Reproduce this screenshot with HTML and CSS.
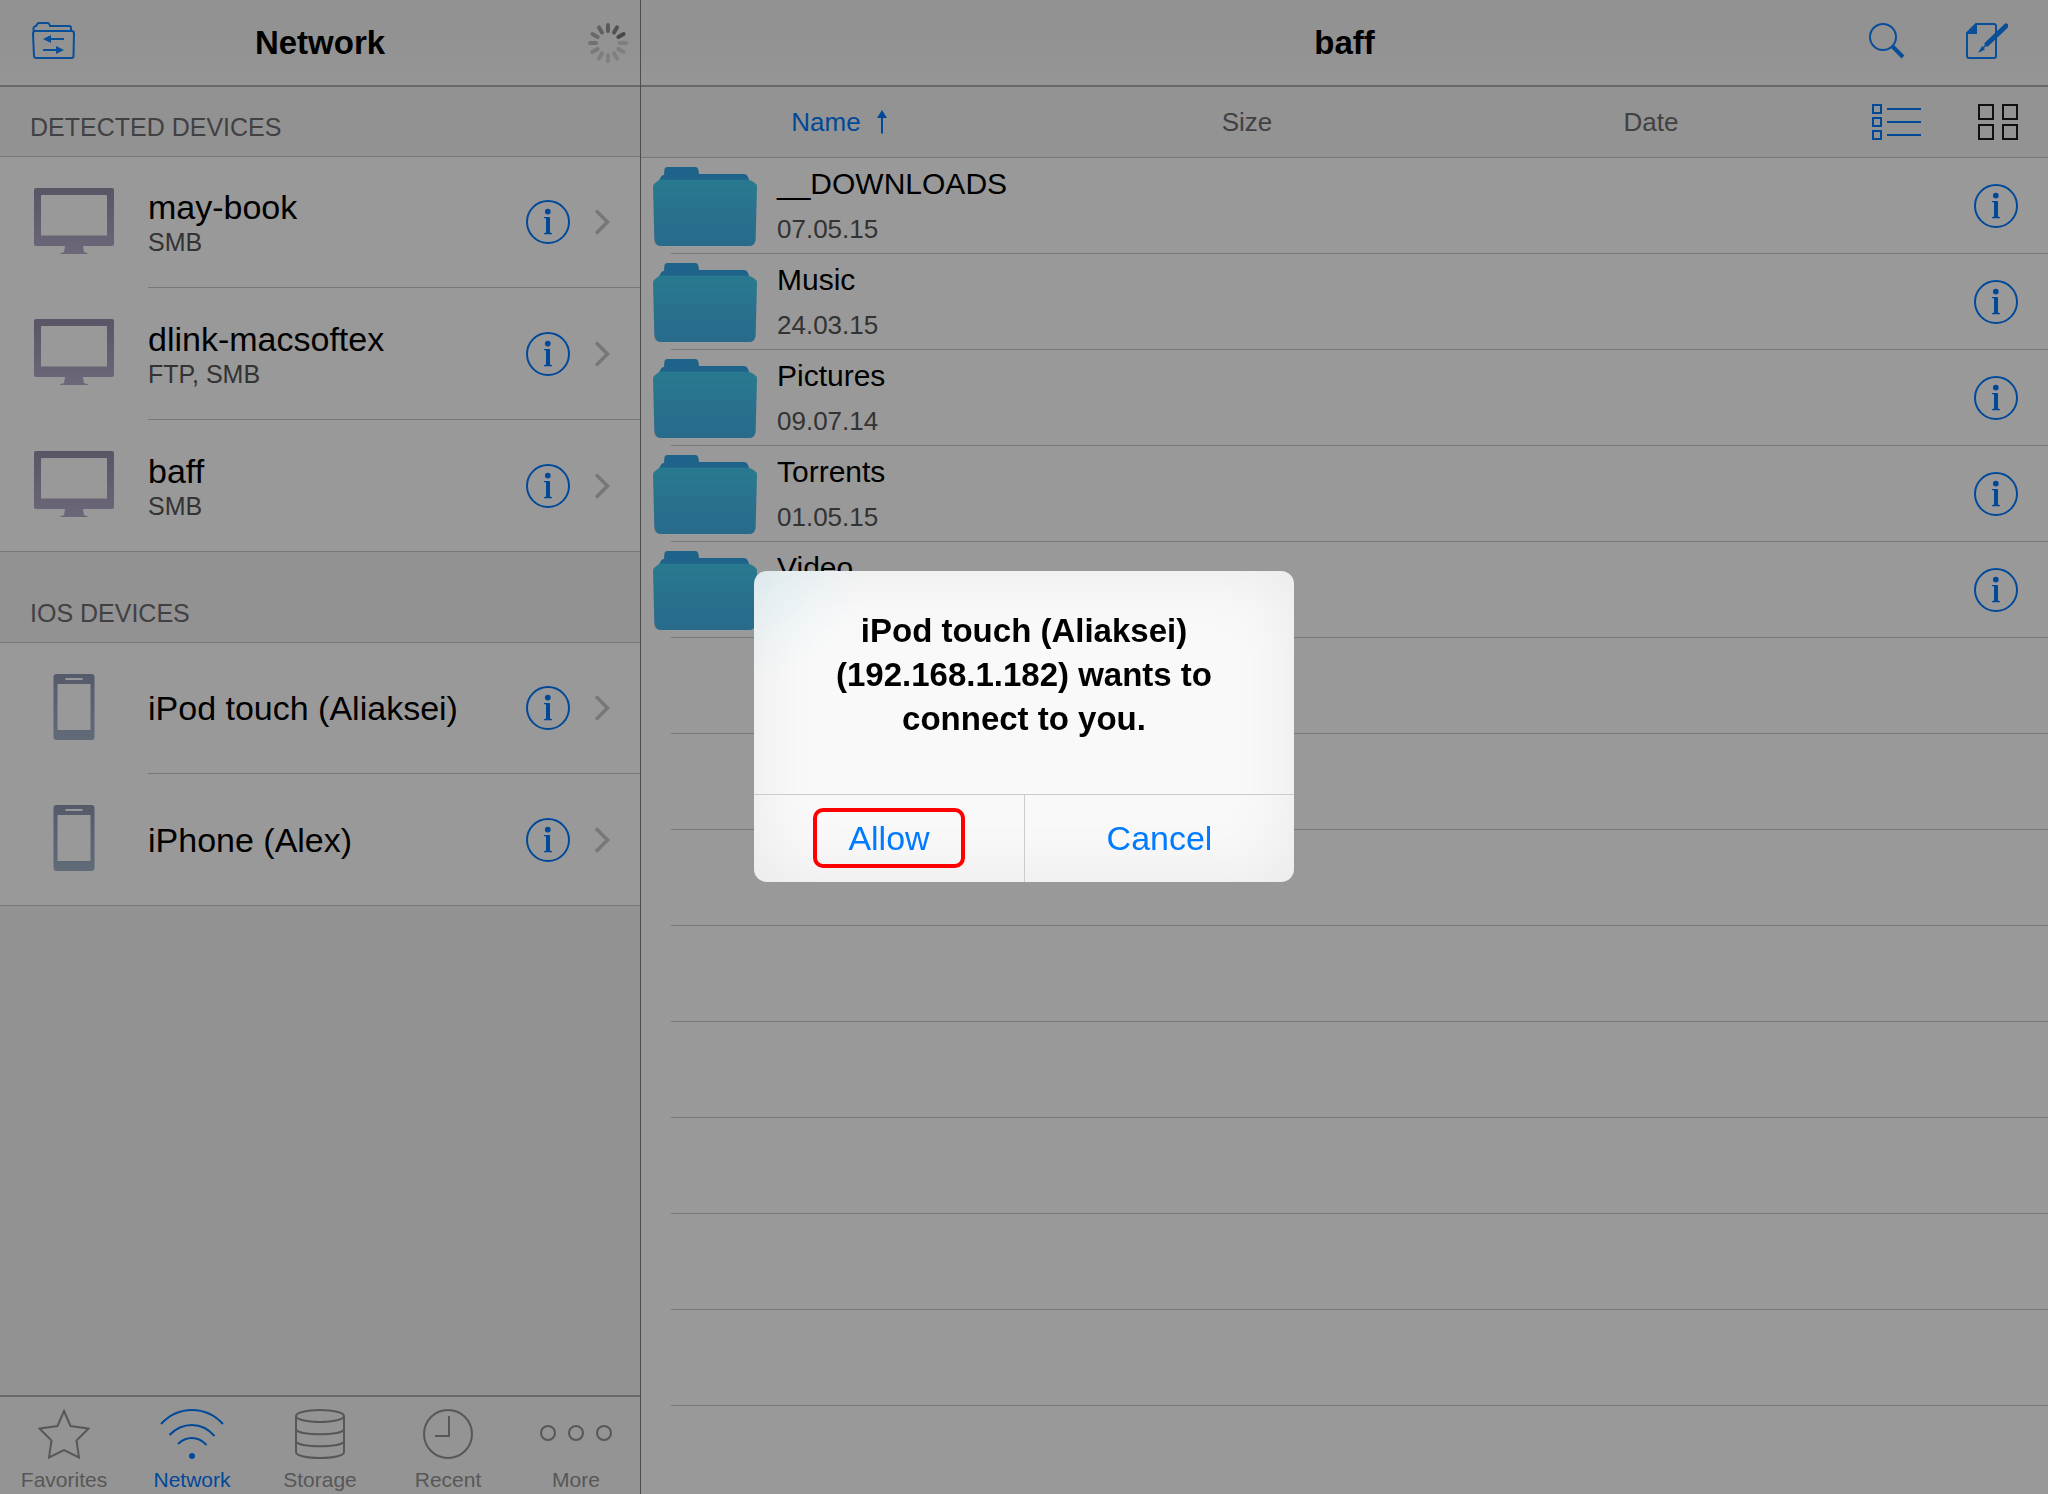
FILE: index.html
```html
<!DOCTYPE html>
<html lang="en">

<head>
  <meta charset="UTF-8" />
  <meta name="viewport" content="width=device-width, initial-scale=1.0" />
  <title>Network</title>
  <link rel="stylesheet" href="styles.css">
</head>

<body>
  <!-- Shared icons -->
  <svg class="sprite" aria-hidden="true">
    <defs>
      <linearGradient id="folder-fill" x1="0" y1="0" x2="0" y2="1">
        <stop offset="0" stop-color="#43cbf0" />
        <stop offset="1" stop-color="#43b1e8" />
      </linearGradient>
      <linearGradient id="monitor-fill" x1="0" y1="0" x2="0" y2="1">
        <stop offset="0" stop-color="#968eaa" />
        <stop offset="1" stop-color="#b4adca" />
      </linearGradient>
      <linearGradient id="phone-fill" x1="0" y1="0" x2="0" y2="1">
        <stop offset="0" stop-color="#8e97b3" />
        <stop offset="1" stop-color="#a2b3c8" />
      </linearGradient>
    </defs>
    <symbol id="icon-info" viewBox="0 0 44 44">
      <circle cx="22" cy="22" r="21" fill="none" stroke="currentColor" stroke-width="2" />
      <circle cx="21.8" cy="11.6" r="2.9" fill="currentColor" />
      <path d="M18 17h6v15.600l2 .6v1h-8v-1l2-.6V18.600l-2-.6z" fill="currentColor" />
    </symbol>
    <symbol id="icon-chevron" viewBox="0 0 16 26">
      <path d="M2 1.500 13.500 13 2 24.500" fill="none" stroke="currentColor" stroke-width="3.500" />
    </symbol>
    <symbol id="icon-monitor" viewBox="0 0 80 66">
      <path fill="url(#monitor-fill)" fill-rule="evenodd" d="M2 0h76a2 2 0 0 1 2 2v54a2 2 0 0 1-2 2H49l1 6 4 1.500v.5H26v-.5l4-1.500 1-6H2a2 2 0 0 1-2-2V2a2 2 0 0 1 2-2zM8 7a1 1 0 0 0-1 1v39.500h66V8a1 1 0 0 0-1-1z" />
    </symbol>
    <symbol id="icon-phone" viewBox="0 0 41 66">
      <path fill="url(#phone-fill)" fill-rule="evenodd" d="M3 0h35a3 3 0 0 1 3 3v60a3 3 0 0 1-3 3H3a3 3 0 0 1-3-3V3a3 3 0 0 1 3-3zM4 10v46h33V10zM12 4v2h17V4z" />
    </symbol>
    <symbol id="icon-folder" viewBox="0 0 312 237">
      <path fill="#36a6e6" d="M14 50 22 32Q26 24 33 23L34 9Q35 0 44 0H126Q135 0 136 9L138 21H272Q282 21 286 32L292 50z" />
      <path fill="url(#folder-fill)" d="M14 42Q18 38 26 38H284Q290 38 298 43L308 50Q312 53 312 60L308 215Q307 237 288 237H24Q5 237 4 215L0 60Q0 53 5 49z" />
    </symbol>
  </svg>

  <div class="app">
    <aside class="sidebar">
      <header class="navbar">
        <button class="icon-button transfers" aria-label="Transfers">
          <svg width="43" height="37" viewBox="0 0 43 37" fill="none" stroke="currentColor" stroke-width="2">
            <path d="M1.500 9V6.500Q1.500 4.500 4 4L5 2.500Q5.500 1 7 1H15.500Q17 1 17.500 2.500L18 4H37Q39 4 39 6V9" />
            <path d="M3 9H40Q42 9 42 11.500L41.500 34Q41.500 36 39.500 36H4Q2.200 36 2 34L1 12Q1 9 3 9z" />
            <path d="M32 17H17M11 28H26" />
            <path d="M11 17l8-4v8zM32 28l-8-4v8z" fill="currentColor" stroke="none" />
          </svg>
        </button>
        <h1>Network</h1>
        <svg class="spinner" width="40" height="40" viewBox="-20 -20 40 40" stroke="#000" stroke-width="4" stroke-linecap="round" role="img" aria-label="Loading">
          <path d="M0-12v-6" opacity=".38" />
          <path d="M0-12v-6" transform="rotate(30)" opacity=".44" />
          <path d="M0-12v-6" transform="rotate(60)" opacity=".5" />
          <path d="M0-12v-6" transform="rotate(90)" opacity=".13" />
          <path d="M0-12v-6" transform="rotate(120)" opacity=".13" />
          <path d="M0-12v-6" transform="rotate(150)" opacity=".13" />
          <path d="M0-12v-6" transform="rotate(180)" opacity=".13" />
          <path d="M0-12v-6" transform="rotate(210)" opacity=".14" />
          <path d="M0-12v-6" transform="rotate(240)" opacity=".17" />
          <path d="M0-12v-6" transform="rotate(270)" opacity=".22" />
          <path d="M0-12v-6" transform="rotate(300)" opacity=".28" />
          <path d="M0-12v-6" transform="rotate(330)" opacity=".33" />
        </svg>
      </header>

      <div class="device-groups">
        <section>
          <h2 class="first">DETECTED DEVICES</h2>
          <ul class="devices">
            <li>
              <svg class="device-icon"><use href="#icon-monitor" /></svg>
              <div class="device">
                <p class="text"><span class="name">may-book</span><span class="protocol">SMB</span></p>
                <button class="info" aria-label="Info"><svg><use href="#icon-info" /></svg></button>
                <svg class="chevron"><use href="#icon-chevron" /></svg>
              </div>
            </li>
            <li>
              <svg class="device-icon"><use href="#icon-monitor" /></svg>
              <div class="device">
                <p class="text"><span class="name">dlink-macsoftex</span><span class="protocol">FTP, SMB</span></p>
                <button class="info" aria-label="Info"><svg><use href="#icon-info" /></svg></button>
                <svg class="chevron"><use href="#icon-chevron" /></svg>
              </div>
            </li>
            <li>
              <svg class="device-icon"><use href="#icon-monitor" /></svg>
              <div class="device">
                <p class="text"><span class="name">baff</span><span class="protocol">SMB</span></p>
                <button class="info" aria-label="Info"><svg><use href="#icon-info" /></svg></button>
                <svg class="chevron"><use href="#icon-chevron" /></svg>
              </div>
            </li>
          </ul>
        </section>

        <section>
          <h2>IOS DEVICES</h2>
          <ul class="devices">
            <li>
              <svg class="device-icon"><use href="#icon-phone" /></svg>
              <div class="device">
                <p class="text"><span class="name">iPod touch (Aliaksei)</span></p>
                <button class="info" aria-label="Info"><svg><use href="#icon-info" /></svg></button>
                <svg class="chevron"><use href="#icon-chevron" /></svg>
              </div>
            </li>
            <li>
              <svg class="device-icon"><use href="#icon-phone" /></svg>
              <div class="device">
                <p class="text"><span class="name">iPhone (Alex)</span></p>
                <button class="info" aria-label="Info"><svg><use href="#icon-info" /></svg></button>
                <svg class="chevron"><use href="#icon-chevron" /></svg>
              </div>
            </li>
          </ul>
        </section>
      </div>

      <nav class="tabbar">
        <a href="#favorites">
          <svg width="52" height="50" viewBox="0 0 52 50"><path d="M26 2 32.500 17 50.500 19.500 38.500 31.500 41 48.500 26 41 11 48.500 13.500 31.500 1.500 19.500 19.500 17z" /></svg>
          Favorites
        </a>
        <a href="#network" class="active">
          <svg width="64" height="50" viewBox="0 0 64 50">
            <path d="M1 15Q14 1 32 1T63 15M9.500 26Q19 16 32 16T54.500 27M18 35Q24 29 32 29T46.500 36" />
            <circle class="solid" cx="32" cy="47" r="3" />
          </svg>
          Network
        </a>
        <a href="#storage">
          <svg width="50" height="50" viewBox="0 0 50 50">
            <ellipse cx="25" cy="7" rx="24" ry="6" />
            <path d="M1 7V43C1 51 49 51 49 43V7M1 20C1 27 49 27 49 20M1 32C1 39 49 39 49 32" />
          </svg>
          Storage
        </a>
        <a href="#recent">
          <svg width="50" height="50" viewBox="0 0 50 50"><circle cx="25" cy="25" r="24" /><path d="M26 7V27H12" /></svg>
          Recent
        </a>
        <a href="#more">
          <svg width="72" height="50" viewBox="0 0 72 50"><circle cx="8" cy="24" r="7" /><circle cx="36" cy="24" r="7" /><circle cx="64" cy="24" r="7" /></svg>
          More
        </a>
      </nav>
    </aside>

    <main class="browser">
      <header class="navbar">
        <h1>baff</h1>
        <div class="actions">
          <button class="icon-button" aria-label="Search">
            <svg width="36" height="36" viewBox="0 0 36 36" fill="none" stroke="currentColor">
              <circle cx="14" cy="14" r="13" stroke-width="2" />
              <path d="M23 23 34 34" stroke-width="4" />
            </svg>
          </button>
          <button class="icon-button" aria-label="Edit">
            <svg width="42" height="36" viewBox="0 0 42 36" fill="none" stroke="currentColor" stroke-width="2">
              <path d="M10 1H28Q30 1 30 3V33Q30 35 28 35H3Q1 35 1 33V10z" />
              <path d="M11 1V11H1z" fill="currentColor" stroke="none" />
              <path d="M21 21 40 3" stroke-width="5" stroke-linecap="round" />
              <path d="M12 30 16 23 19 26.500z" fill="currentColor" stroke="none" />
              <path d="M16 26 20 22" stroke-width="1.500" />
            </svg>
          </button>
        </div>
      </header>

      <div class="sortbar">
        <button class="sort active">Name
          <svg width="18" height="24" viewBox="0 0 18 24"><path d="M5 0 10 8H6V23.500H4V8H0z" fill="currentColor" /></svg>
        </button>
        <button class="sort">Size</button>
        <button class="sort">Date</button>
        <div class="views">
          <button class="view active" aria-label="List view">
            <svg width="49" height="36" viewBox="0 0 49 36" fill="none" stroke="currentColor" stroke-width="2">
              <path d="M1 1h8v8H1zM1 14h8v8H1zM1 27h8v8H1zM15 5h34M15 18h34M15 31h34" />
            </svg>
          </button>
          <button class="view" aria-label="Grid view">
            <svg width="40" height="36" viewBox="0 0 40 36" fill="none" stroke="currentColor" stroke-width="2">
              <path d="M1 1h14v14H1zM25 1h14v14H25zM1 21h14v14H1zM25 21h14v14H25z" />
            </svg>
          </button>
        </div>
      </div>

      <ul class="files">
        <li>
          <svg class="folder"><use href="#icon-folder" /></svg>
          <p class="text"><span class="name">__DOWNLOADS</span><time>07.05.15</time></p>
          <button class="info" aria-label="Info"><svg><use href="#icon-info" /></svg></button>
        </li>
        <li>
          <svg class="folder"><use href="#icon-folder" /></svg>
          <p class="text"><span class="name">Music</span><time>24.03.15</time></p>
          <button class="info" aria-label="Info"><svg><use href="#icon-info" /></svg></button>
        </li>
        <li>
          <svg class="folder"><use href="#icon-folder" /></svg>
          <p class="text"><span class="name">Pictures</span><time>09.07.14</time></p>
          <button class="info" aria-label="Info"><svg><use href="#icon-info" /></svg></button>
        </li>
        <li>
          <svg class="folder"><use href="#icon-folder" /></svg>
          <p class="text"><span class="name">Torrents</span><time>01.05.15</time></p>
          <button class="info" aria-label="Info"><svg><use href="#icon-info" /></svg></button>
        </li>
        <li>
          <svg class="folder"><use href="#icon-folder" /></svg>
          <p class="text"><span class="name">Video</span></p>
          <button class="info" aria-label="Info"><svg><use href="#icon-info" /></svg></button>
        </li>
        <li></li>
        <li></li>
        <li></li>
        <li></li>
        <li></li>
        <li></li>
        <li></li>
        <li></li>
      </ul>
    </main>
  </div>

  <div class="overlay">
    <div class="alert" role="alertdialog" aria-modal="true" aria-labelledby="alert-title">
      <h2 id="alert-title">iPod touch (Aliaksei) (192.168.1.182) wants to connect to you.</h2>
      <div class="alert-buttons">
        <button><span class="marked">Allow</span></button>
        <button>Cancel</button>
      </div>
    </div>
  </div>
</body>

</html>
```
FILE: styles.css
```css
/* --- RESET E BASE --- */
* {
  margin: 0;
  padding: 0;
  box-sizing: border-box;
}

body {
  font-family: "Liberation Sans", Arial, sans-serif;
  color: #000;
  background: #fff;
}

ul {
  list-style: none;
}

svg {
  display: block;
}

button {
  font: inherit;
  color: inherit;
  background: none;
  border: none;
  cursor: pointer;
}

a {
  color: inherit;
  text-decoration: none;
}

.sprite {
  position: absolute;
  width: 0;
  height: 0;
}

.app {
  display: grid;
  grid-template-columns: 641px 1fr;
  height: 100vh;
}

/* --- NAVBAR --- */
.navbar {
  display: grid;
  grid-template-columns: 1fr auto 1fr;
  align-items: center;
  height: 87px;
  border-bottom: 2px solid #acadac;
  background: linear-gradient(#f4f4f4 50%, #fafafa);
}

.navbar h1 {
  grid-column: 2;
  font-size: 33px;
  line-height: 40px;
}

.icon-button {
  padding-bottom: 4px;
  color: #1082ff;
}

.sidebar .navbar {
  padding: 0 12px;
}

.transfers {
  justify-self: start;
  margin-left: 20px;
}

.spinner {
  justify-self: end;
}

.actions {
  display: flex;
  justify-content: flex-end;
  gap: 61px;
  padding-right: 40px;
}

/* --- SIDEBAR --- */
.sidebar {
  display: flex;
  flex-direction: column;
  min-height: 0;
  border-right: 1px solid #808080;
  background: #f4f4f4;
}

.device-groups {
  flex: 1;
  min-height: 0;
  overflow: hidden;
}

.device-groups h2 {
  height: 91px;
  padding: 45px 30px 0;
  font-size: 25px;
  font-weight: 400;
  line-height: 32px;
  color: #6d6d72;
  border-bottom: 1px solid #c8c7cc;
}

.device-groups h2.first {
  height: 70px;
  padding-top: 24px;
}

.devices {
  background: #fff;
  border-bottom: 1px solid #c8c7cc;
}

.devices li {
  display: flex;
  align-items: center;
  gap: 34px;
  padding-left: 34px;
}

.device-icon {
  width: 80px;
  height: 66px;
  margin-bottom: 4px;
}

.device {
  flex: 1;
  display: flex;
  align-items: center;
  height: 132px;
  padding-right: 30px;
  border-bottom: 1px solid #c8c7cc;
}

.devices li:first-child .device {
  height: 131px;
}

.devices li:last-child .device {
  height: 131px;
  border-bottom: none;
}

.text {
  flex: 1;
  display: flex;
  flex-direction: column;
}

.device .name {
  font-size: 34px;
  line-height: 40px;
}

.device .protocol {
  font-size: 25px;
  line-height: 30px;
  color: #555;
}

.info {
  color: #007aff;
}

.info svg {
  width: 44px;
  height: 44px;
}

.chevron {
  width: 16px;
  height: 26px;
  margin-left: 24px;
  color: #c7c7cc;
}

/* --- TABBAR --- */
.tabbar {
  display: grid;
  grid-template-columns: repeat(5, 1fr);
  border-top: 2px solid #acadac;
  background: #f7f7f7;
}

.tabbar a {
  display: flex;
  flex-direction: column;
  align-items: center;
  gap: 10px;
  padding: 12px 0 3px;
  font-size: 21px;
  line-height: 22px;
  color: #929292;
}

.tabbar a.active {
  color: #007aff;
}

.tabbar svg {
  fill: none;
  stroke: currentColor;
  stroke-width: 2;
}

.tabbar .solid {
  fill: currentColor;
  stroke: none;
}

/* --- FILES --- */
.browser {
  display: flex;
  flex-direction: column;
  min-width: 0;
  min-height: 0;
}

.sortbar {
  display: grid;
  grid-template-columns: repeat(3, 1fr) 195px;
  height: 71px;
  border-bottom: 1px solid #c8c7cc;
  background: #f5f5f5;
}

.sort {
  display: flex;
  justify-content: center;
  align-items: center;
  gap: 16px;
  font-size: 26px;
  color: #6d6d72;
}

.sort.active,
.view.active {
  color: #007aff;
}

.views {
  display: flex;
  justify-content: space-between;
  align-items: center;
  padding: 0 30px 0 19px;
}

.view {
  color: #1c1c1c;
}

.files {
  flex: 1;
  min-height: 0;
  overflow: hidden;
}

/* the divider starts inside the row, under the folder */
.files li {
  display: flex;
  align-items: center;
  gap: 20px;
  height: 96px;
  padding: 0 30px 0 12px;
  background: linear-gradient(#c8c7cc, #c8c7cc) 30px 100% / 100% 1px no-repeat;
}

.folder {
  width: 104px;
  height: 79px;
}

.files .text {
  align-self: flex-start;
  padding-top: 5px;
}

.files .name {
  font-size: 30px;
  line-height: 42px;
}

.files time {
  font-size: 26px;
  line-height: 48px;
  color: #555;
}

/* --- ALERT --- */
.overlay {
  position: fixed;
  inset: 0;
  display: flex;
  justify-content: center;
  align-items: center;
  padding-bottom: 42px;
  background: rgba(0, 0, 0, 0.4);
}

.alert {
  width: 540px;
  border-radius: 13px;
  overflow: hidden;
  background: radial-gradient(circle at 0 0, #e9f5f9, rgba(233, 245, 249, 0) 110px), #f9f9f9;
  box-shadow: inset 0 0 70px rgba(0, 0, 0, 0.07);
}

.alert h2 {
  padding: 38px 60px 53px;
  font-size: 33px;
  line-height: 44px;
  text-align: center;
}

.alert-buttons {
  display: grid;
  grid-template-columns: 1fr 1fr;
  border-top: 1px solid #cbccd0;
}

.alert-buttons button {
  display: flex;
  justify-content: center;
  align-items: center;
  height: 87px;
  font-size: 34px;
  color: #007aff;
}

.alert-buttons button + button {
  border-left: 1px solid #cbccd0;
}

.marked {
  padding: 6px 31px;
  line-height: 40px;
  border: 4px solid #f00;
  border-radius: 10px;
}
```
